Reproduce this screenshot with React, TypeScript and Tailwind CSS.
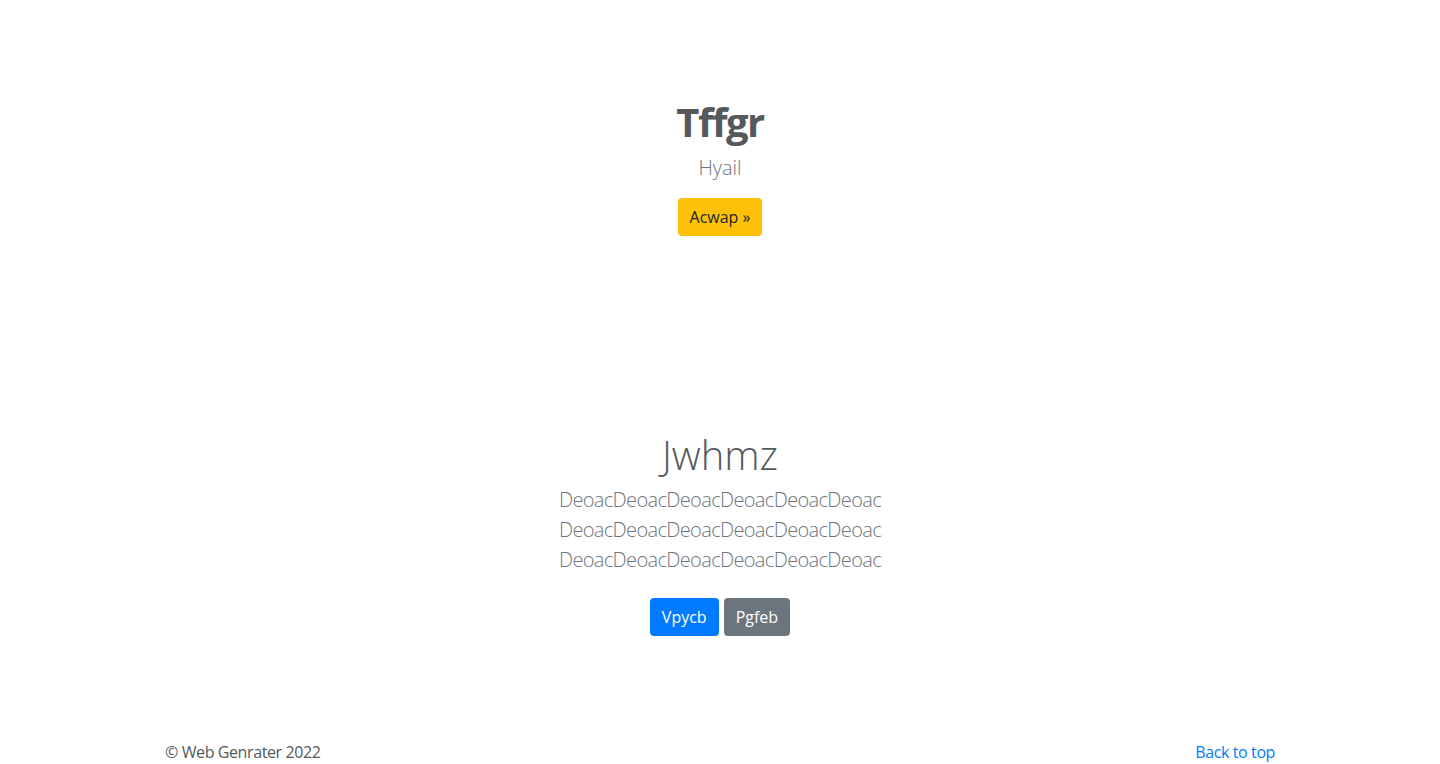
const lines = [
  "DeoacDeoacDeoacDeoacDeoacDeoac",
  "DeoacDeoacDeoacDeoacDeoacDeoac",
  "DeoacDeoacDeoacDeoacDeoacDeoac",
];

const App = () => {
  return (
    <div className="min-h-screen bg-white font-['Open_Sans',sans-serif] text-[#212529]">
      <section className="pt-[98px] text-center">
        <h1 className="mb-[7px] text-[40px] leading-[48px] font-bold tracking-[-1.5px] text-[#55595c]">
          Tffgr
        </h1>
        <p className="mb-[15px] text-xl leading-[30px] font-light text-[#6c757d]">
          Hyail
        </p>
        <button className="h-[38px] rounded bg-[#ffc107] px-3 text-base leading-6 text-[#212529]">
          Acwap »
        </button>
      </section>

      <section className="pt-[195px] text-center">
        <h1 className="mb-[6px] text-[40px] leading-[48px] font-light text-[#55595c]">
          Jwhmz
        </h1>
        <div className="text-xl leading-[30px] font-light tracking-[-0.65px] text-[#6c757d]">
          {lines.map((line, i) => (
            <p key={i}>{line}</p>
          ))}
        </div>
        <div className="mt-[23px] flex justify-center gap-[5px]">
          <button className="h-[38px] rounded bg-[#007bff] px-3 text-base leading-6 text-white">
            Vpycb
          </button>
          <button className="h-[38px] rounded bg-[#6c757d] px-3 text-base leading-6 text-white">
            Pgfeb
          </button>
        </div>
      </section>

      <footer className="mx-auto mt-[104px] flex w-[1140px] justify-between px-[15px] text-base leading-6 tracking-[-0.4px] text-[#55595c]">
        <p>© Web Genrater 2022</p>
        <a href="#" className="text-[#007bff]">
          Back to top
        </a>
      </footer>
    </div>
  );
};

export default App;
